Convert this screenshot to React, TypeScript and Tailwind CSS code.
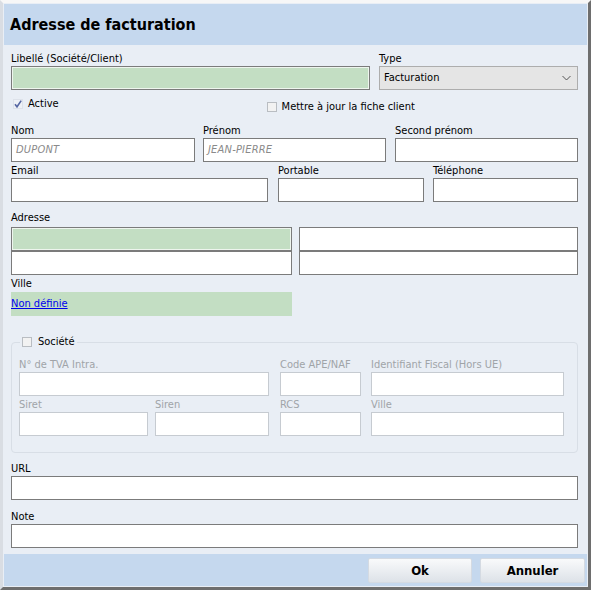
import type { ReactNode } from 'react';

const ui = "font-['DejaVu_Sans_Condensed','DejaVu_Sans',sans-serif]";

function Label({ children, muted = false }: { children: ReactNode; muted?: boolean }) {
  return (
    <div className={`h-[14px] text-[11px] leading-[14px] whitespace-nowrap ${muted ? 'text-[#a0a4a8]' : 'text-black'}`}>
      {children}
    </div>
  );
}

function Input({ w, green = false, value, light = false }: { w: string; green?: boolean; value?: string; light?: boolean }) {
  const border = light ? 'border-[#c6cbd1]' : 'border-[#7b7b7b]';
  const fill = green ? 'bg-[#c3dec3] shadow-[inset_0_0_0_1px_#eef5ee]' : 'bg-white';
  return (
    <div className={`${w} h-[24px] border ${border} ${fill} flex items-center px-[4px]`}>
      {value && <span className="text-[11px] italic text-[#8a8a8a] tracking-[0.2px]">{value}</span>}
    </div>
  );
}

function Field({ w, label, green, value, light, className = '' }: { w: string; label: string; green?: boolean; value?: string; light?: boolean; className?: string }) {
  return (
    <div className={`flex flex-col ${className}`}>
      <Label muted={light}>{label}</Label>
      <Input w={w} green={green} value={value} light={light} />
    </div>
  );
}

function Box({ checked = false }: { checked?: boolean }) {
  return (
    <svg width="10" height="10" viewBox="0 0 10 10" className="shrink-0">
      <rect x="0.5" y="0.5" width="9" height="9" fill={checked ? '#eef1f6' : '#f2f2f2'} stroke={checked ? '#dde2ea' : '#b9bdc2'} />
      {checked && <path d="M2 5.2 L4 7.8 L8.2 1.6" fill="none" stroke="#5667a3" strokeWidth="1.6" />}
    </svg>
  );
}

export default function App() {
  return (
    <div className={`${ui} w-[591px] h-[590px] box-border border-l-[3px] border-l-[#d9dde3] border-t-[3px] border-t-[#f7f7f7] border-r-[3px] border-r-[#6e6e6e] border-b-[3px] border-b-[#6e6e6e] bg-[#e9eef5] p-[1px] flex flex-col`}>
      <div className="h-[41px] bg-[#c5d8ee] flex items-center pl-[6px] pt-[1px]">
        <h1 className="text-[16px] font-bold text-black leading-none">Adresse de facturation</h1>
      </div>

      <div className="flex-1 flex flex-col pl-[7px] pr-[9px]">
        <div className="flex mt-[7px]">
          <Field w="w-[359px]" label="Libellé (Société/Client)" green />
          <div className="flex flex-col ml-[9px]">
            <Label>Type</Label>
            <div className="w-[199px] h-[24px] border border-[#adadad] bg-[#e5e5e5] flex items-center justify-between px-[4px]">
              <span className="text-[11px]">Facturation</span>
              <svg width="9" height="6" viewBox="0 0 9 6" className="mr-[2px]">
                <path d="M0.5 1 L4.5 5 L8.5 1" fill="none" stroke="#555" strokeWidth="1" />
              </svg>
            </div>
          </div>
        </div>

        <div className="flex items-start mt-[7px] h-[14px]">
          <label className="flex items-center gap-[5px] ml-[2px] text-[11px] leading-[14px]">
            <Box checked />
            Active
          </label>
          <label className="flex items-center gap-[5px] ml-[208px] mt-[3px] text-[11px] leading-[14px]">
            <Box />
            Mettre à jour la fiche client
          </label>
        </div>

        <div className="flex mt-[13px]">
          <Field w="w-[184px]" label="Nom" value="DUPONT" />
          <Field w="w-[183px]" label="Prénom" value="JEAN-PIERRE" className="ml-[8px]" />
          <Field w="w-[183px]" label="Second prénom" className="ml-[9px]" />
        </div>

        <div className="flex mt-[2px]">
          <Field w="w-[257px]" label="Email" />
          <Field w="w-[146px]" label="Portable" className="ml-[10px]" />
          <Field w="w-[145px]" label="Téléphone" className="ml-[9px]" />
        </div>

        <div className="mt-[9px]">
          <Label>Adresse</Label>
          <div className="mt-[2px] grid grid-cols-[281px_279px] gap-x-[7px]">
            <Input w="w-[281px]" green />
            <Input w="w-[279px]" />
            <Input w="w-[281px]" />
            <Input w="w-[279px]" />
          </div>
        </div>

        <div className="mt-[2px]">
          <Label>Ville</Label>
          <div className="mt-[1px] w-[281px] h-[24px] bg-[#c3dec3] flex items-center">
            <a href="#" className="text-[11px] text-[#0000ee] underline">Non définie</a>
          </div>
        </div>

        <div className="relative mt-[26px] h-[111px] border border-[#d8dee6] rounded-[4px] pl-[7px] pt-[15px]">
          <label className="absolute -top-[8px] left-[8px] px-[2px] bg-[#e9eef5] flex items-center gap-[6px] text-[11px] leading-[14px]">
            <Box />
            Société
          </label>
          <div className="flex">
            <Field w="w-[250px]" label="N° de TVA Intra." light />
            <Field w="w-[81px]" label="Code APE/NAF" light className="ml-[11px]" />
            <Field w="w-[193px]" label="Identifiant Fiscal (Hors UE)" light className="ml-[10px]" />
          </div>
          <div className="flex mt-[2px]">
            <Field w="w-[129px]" label="Siret" light />
            <Field w="w-[114px]" label="Siren" light className="ml-[7px]" />
            <Field w="w-[81px]" label="RCS" light className="ml-[11px]" />
            <Field w="w-[193px]" label="Ville" light className="ml-[10px]" />
          </div>
        </div>

        <Field w="w-[567px]" label="URL" className="mt-[9px]" />
        <Field w="w-[567px]" label="Note" className="mt-[10px]" />
      </div>

      <div className="h-[32px] bg-[#c5d8ee] flex justify-end items-start pt-[4px] pr-[2px] gap-[8px]">
        <button className="w-[104px] h-[25px] border border-[#d4dae2] rounded-[2px] bg-gradient-to-b from-[#f9fafb] to-[#dde2e8] text-[13px] font-bold text-black">
          Ok
        </button>
        <button className="w-[105px] h-[25px] border border-[#d4dae2] rounded-[2px] bg-gradient-to-b from-[#f9fafb] to-[#dde2e8] text-[13px] font-bold text-black">
          Annuler
        </button>
      </div>
    </div>
  );
}
